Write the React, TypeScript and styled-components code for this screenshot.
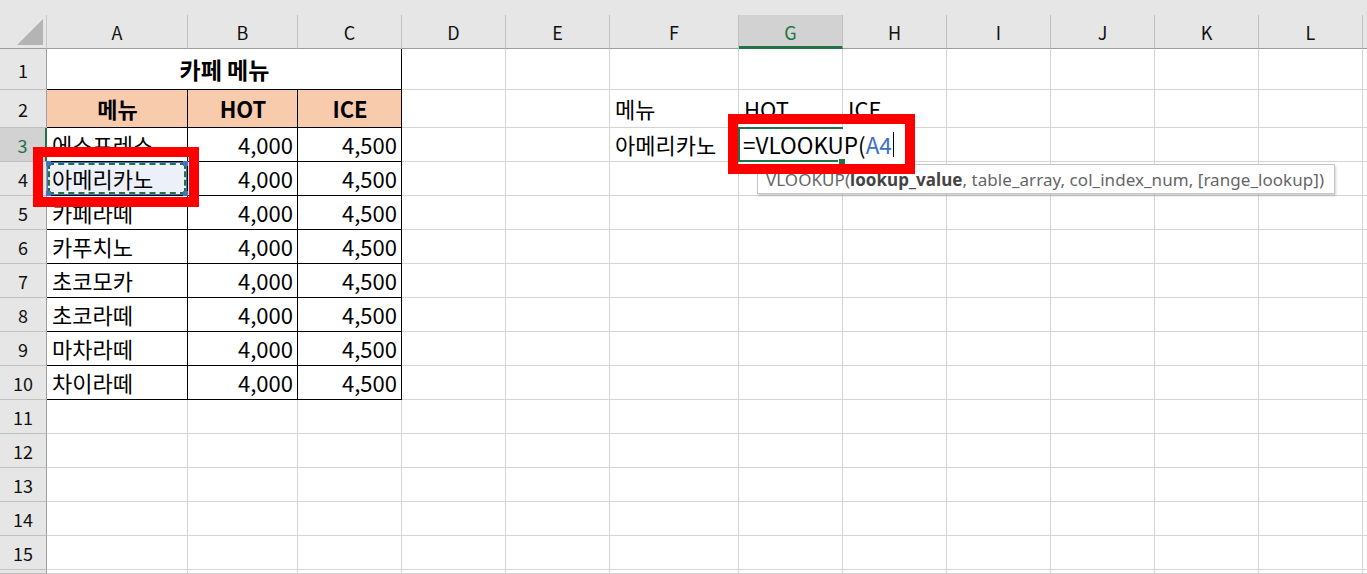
import React from 'react';
import styled, { createGlobalStyle, css } from 'styled-components';

const GlobalStyle = createGlobalStyle`
  html, body {
    margin: 0;
    padding: 0;
    background: #ffffff;
    overflow: hidden;
  }
  body {
    font-family: 'Noto Sans CJK KR', 'Noto Sans', sans-serif;
  }
`;

const COL_WIDTHS = [141, 110, 104, 104, 104, 129, 104, 104, 104, 104, 104, 104];
const LETTERS = ['A', 'B', 'C', 'D', 'E', 'F', 'G', 'H', 'I', 'J', 'K', 'L'];
const ROW_COUNT = 15;

const GRID = '#d4d4d4';
const EXCEL_GREEN = '#217346';

const Sheet = styled.div`
  position: relative;
  width: 1367px;
  height: 574px;
  overflow: hidden;
  display: grid;
  grid-template-columns: 47px ${COL_WIDTHS.map((w) => `${w}px`).join(' ')} 1fr;
  grid-template-rows: 15px 34px 41px 38px repeat(13, 34px) 1fr;
  font-family: 'Noto Sans CJK KR', sans-serif;
  color: #000;
`;

const TopStrip = styled.div`
  grid-column: 1 / -1;
  background: #e6e6e6;
`;

const Corner = styled.div`
  background: #e6e6e6;
  border-right: 1px solid #c8c8c8;
  border-bottom: 1px solid #9e9e9e;
  box-sizing: border-box;
  display: flex;
  align-items: flex-end;
  justify-content: flex-end;
  padding: 0 3px 3px 0;
`;

const CornerTriangle = styled.div`
  width: 26px;
  height: 26px;
  background: #b4b4b4;
  clip-path: polygon(100% 0, 100% 100%, 0 100%);
`;

const ColHead = styled.div<{ $active?: boolean }>`
  box-sizing: border-box;
  background: ${(p) => (p.$active ? '#d2d2d2' : '#e6e6e6')};
  border-right: 1px solid #c0c0c0;
  border-bottom: ${(p) => (p.$active ? `3px solid ${EXCEL_GREEN}` : '1px solid #9e9e9e')};
  display: flex;
  align-items: center;
  justify-content: center;
  font-size: 18px;
  color: ${(p) => (p.$active ? EXCEL_GREEN : '#111')};
  padding-top: ${(p) => (p.$active ? '2px' : '0')};
`;

const RowHead = styled.div<{ $active?: boolean }>`
  box-sizing: border-box;
  background: ${(p) => (p.$active ? '#d2d2d2' : '#e6e6e6')};
  border-right: ${(p) => (p.$active ? `2px solid ${EXCEL_GREEN}` : '1px solid #9e9e9e')};
  border-bottom: 1px solid #c0c0c0;
  display: flex;
  align-items: center;
  justify-content: center;
  font-size: 18px;
  color: ${(p) => (p.$active ? EXCEL_GREEN : '#111')};
  padding-top: 1px;
`;

type Align = 'left' | 'right' | 'center';

const Cell = styled.div<{
  $align?: Align;
  $bold?: boolean;
  $fill?: string;
  $boxed?: boolean;
  $span?: number;
  $size?: number;
}>`
  box-sizing: border-box;
  min-width: 0;
  display: flex;
  align-items: center;
  padding: 0 4px 1px 5px;
  white-space: nowrap;
  font-size: ${(p) => p.$size ?? 22}px;
  background: ${(p) => p.$fill || '#ffffff'};
  font-weight: ${(p) => (p.$bold ? 700 : 400)};
  justify-content: ${(p) =>
    p.$align === 'right' ? 'flex-end' : p.$align === 'center' ? 'center' : 'flex-start'};
  border-right: 1px solid ${(p) => (p.$boxed ? '#000' : GRID)};
  border-bottom: 1px solid ${(p) => (p.$boxed ? '#000' : GRID)};
  ${(p) =>
    p.$span &&
    css`
      grid-column: span ${p.$span};
    `}
`;

const RefCell = styled(Cell)`
  position: relative;
  background: #ebf0f9;

  &::before {
    content: '';
    position: absolute;
    top: 0;
    left: 0;
    right: 0;
    bottom: 0;
    border: 1px solid #4472c4;
    outline: 2px dashed ${EXCEL_GREEN};
    outline-offset: -3px;
  }

  &::after {
    content: '';
    position: absolute;
    top: -1px;
    left: -1px;
    width: 5px;
    height: 5px;
    background: #4472c4;
    box-shadow: 137px 0 #4472c4, 0 30px #4472c4, 137px 30px #4472c4;
  }
`;

const EditCell = styled.div`
  position: relative;
  z-index: 2;
  box-sizing: border-box;

  &::before {
    content: '';
    position: absolute;
    top: -1px;
    left: -1px;
    right: 0;
    bottom: 0;
    border-top: 2px solid ${EXCEL_GREEN};
    border-left: 2px solid ${EXCEL_GREEN};
    border-bottom: 2px solid ${EXCEL_GREEN};
    z-index: 3;
    pointer-events: none;
  }

  &::after {
    content: '';
    position: absolute;
    right: -3px;
    bottom: -3px;
    width: 6px;
    height: 5px;
    background: ${EXCEL_GREEN};
    border: 1px solid #fff;
    z-index: 4;
  }
`;

const EditText = styled.div`
  position: absolute;
  top: -1px;
  left: 0;
  height: 35px;
  width: 168px;
  background: #ffffff;
  display: flex;
  align-items: center;
  padding: 0 0 1px 4px;
  box-sizing: border-box;
  font-size: 22.5px;
  white-space: nowrap;
`;

const RefText = styled.span`
  color: #3d6fc6;
`;

const Caret = styled.span`
  display: inline-block;
  width: 1px;
  height: 25px;
  background: #000;
  margin-left: 1px;
`;

const Highlight = styled.div<{ $x: number; $y: number; $w: number; $h: number }>`
  position: absolute;
  left: ${(p) => p.$x}px;
  top: ${(p) => p.$y}px;
  width: ${(p) => p.$w}px;
  height: ${(p) => p.$h}px;
  box-sizing: border-box;
  border: 10px solid #ff0000;
  z-index: 10;
  pointer-events: none;
`;

const ArgTip = styled.div`
  position: absolute;
  left: 757px;
  top: 164px;
  width: 578px;
  height: 30px;
  box-sizing: border-box;
  background: #ffffff;
  border: 1px solid #c6c6c6;
  box-shadow: 1px 2px 2px rgba(0, 0, 0, 0.18);
  z-index: 8;
  display: flex;
  align-items: center;
  padding: 1px 0 0 8px;
  font-family: 'Noto Sans', sans-serif;
  font-size: 17px;
  letter-spacing: 0.05px;
  color: #666666;
  white-space: nowrap;
`;

const ArgActive = styled.b`
  color: #444444;
  font-weight: 700;
`;

const MENU = ['에스프레소', '아메리카노', '카페라떼', '카푸치노', '초코모카', '초코라떼', '마차라떼', '차이라떼'];

type CellSpec = {
  text?: React.ReactNode;
  align?: Align;
  bold?: boolean;
  fill?: string;
  boxed?: boolean;
  span?: number;
  size?: number;
  kind?: 'ref' | 'edit';
};

function buildRow(r: number): CellSpec[] {
  const cells: CellSpec[] = [];
  if (r === 1) {
    cells.push({ text: '카페 메뉴', align: 'center', bold: true, boxed: true, span: 3, size: 23 });
  } else if (r === 2) {
    const fill = '#f8cbad';
    cells.push({ text: '메뉴', align: 'center', bold: true, boxed: true, fill });
    cells.push({ text: 'HOT', align: 'center', bold: true, boxed: true, fill });
    cells.push({ text: 'ICE', align: 'center', bold: true, boxed: true, fill });
  } else if (r <= 10) {
    cells.push({ text: MENU[r - 3], boxed: true, kind: r === 4 ? 'ref' : undefined });
    cells.push({ text: '4,000', align: 'right', boxed: true });
    cells.push({ text: '4,500', align: 'right', boxed: true });
  } else {
    cells.push({}, {}, {});
  }

  // D to M
  for (let c = 3; c <= 12; c++) {
    if (r === 2 && c === 5) cells.push({ text: '메뉴' });
    else if (r === 2 && c === 6) cells.push({ text: 'HOT' });
    else if (r === 2 && c === 7) cells.push({ text: 'ICE' });
    else if (r === 3 && c === 5) cells.push({ text: '아메리카노' });
    else if (r === 3 && c === 6) cells.push({ kind: 'edit' });
    else cells.push({});
  }
  return cells;
}

function renderCell(spec: CellSpec, key: string) {
  if (spec.kind === 'edit') {
    return (
      <EditCell key={key}>
        <EditText>
          =VLOOKUP(<RefText>A4</RefText>
          <Caret />
        </EditText>
      </EditCell>
    );
  }
  const Comp = spec.kind === 'ref' ? RefCell : Cell;
  return (
    <Comp
      key={key}
      $align={spec.align}
      $bold={spec.bold}
      $fill={spec.fill}
      $boxed={spec.boxed}
      $span={spec.span}
      $size={spec.size}
    >
      {spec.text}
    </Comp>
  );
}

export default function App() {
  const rows = Array.from({ length: ROW_COUNT + 1 }, (_, i) => i + 1);

  return (
    <>
      <GlobalStyle />
      <Sheet>
        <TopStrip />
        <Corner>
          <CornerTriangle />
        </Corner>
        {LETTERS.map((l) => (
          <ColHead key={l} $active={l === 'G'}>
            {l}
          </ColHead>
        ))}
        <ColHead />

        {rows.map((r) => (
          <React.Fragment key={r}>
            <RowHead $active={r === 3}>{r <= ROW_COUNT ? r : ''}</RowHead>
            {buildRow(r).map((spec, i) => renderCell(spec, `${r}-${i}`))}
          </React.Fragment>
        ))}

        <ArgTip>
          VLOOKUP(<ArgActive>lookup_value</ArgActive>, table_array, col_index_num, [range_lookup])
        </ArgTip>
        <Highlight $x={33} $y={147} $w={166} $h={60} />
        <Highlight $x={728} $y={114} $w={187} $h={60} />
      </Sheet>
    </>
  );
}
